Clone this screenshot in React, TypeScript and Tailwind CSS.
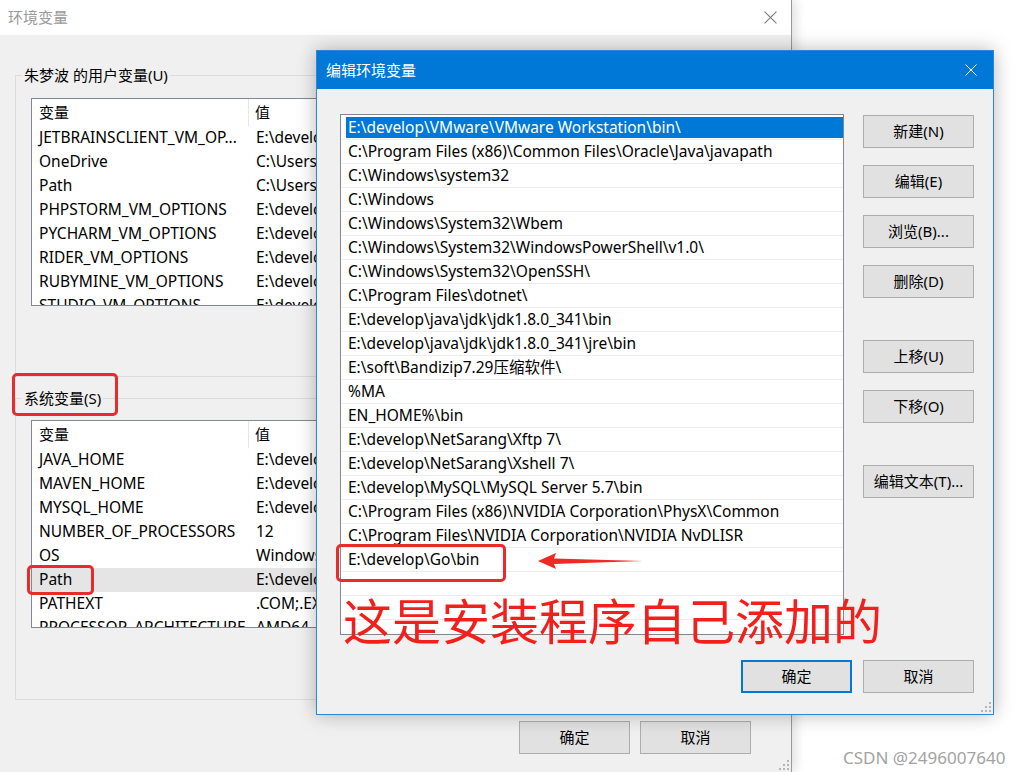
import React from 'react';

const userVars: [string, string][] = [
  ['JETBRAINSCLIENT_VM_OP...', 'E:\\develop\\JetBrains\\vmoptions'],
  ['OneDrive', 'C:\\Users\\OneDrive'],
  ['Path', 'C:\\Users\\AppData\\Local'],
  ['PHPSTORM_VM_OPTIONS', 'E:\\develop\\JetBrains\\vmoptions'],
  ['PYCHARM_VM_OPTIONS', 'E:\\develop\\JetBrains\\vmoptions'],
  ['RIDER_VM_OPTIONS', 'E:\\develop\\JetBrains\\vmoptions'],
  ['RUBYMINE_VM_OPTIONS', 'E:\\develop\\JetBrains\\vmoptions'],
  ['STUDIO_VM_OPTIONS', 'E:\\develop\\JetBrains\\vmoptions'],
];

const sysVars: [string, string][] = [
  ['JAVA_HOME', 'E:\\develop\\java\\jdk'],
  ['MAVEN_HOME', 'E:\\develop\\maven'],
  ['MYSQL_HOME', 'E:\\develop\\MySQL'],
  ['NUMBER_OF_PROCESSORS', '12'],
  ['OS', 'Windows_NT'],
  ['Path', 'E:\\develop\\VMware'],
  ['PATHEXT', '.COM;.EXE;.BAT;.CMD'],
  ['PROCESSOR_ARCHITECTURE', 'AMD64'],
];

const paths = [
  'E:\\develop\\VMware\\VMware Workstation\\bin\\',
  'C:\\Program Files (x86)\\Common Files\\Oracle\\Java\\javapath',
  'C:\\Windows\\system32',
  'C:\\Windows',
  'C:\\Windows\\System32\\Wbem',
  'C:\\Windows\\System32\\WindowsPowerShell\\v1.0\\',
  'C:\\Windows\\System32\\OpenSSH\\',
  'C:\\Program Files\\dotnet\\',
  'E:\\develop\\java\\jdk\\jdk1.8.0_341\\bin',
  'E:\\develop\\java\\jdk\\jdk1.8.0_341\\jre\\bin',
  'E:\\soft\\Bandizip7.29压缩软件\\',
  '%MA',
  'EN_HOME%\\bin',
  'E:\\develop\\NetSarang\\Xftp 7\\',
  'E:\\develop\\NetSarang\\Xshell 7\\',
  'E:\\develop\\MySQL\\MySQL Server 5.7\\bin',
  'C:\\Program Files (x86)\\NVIDIA Corporation\\PhysX\\Common',
  'C:\\Program Files\\NVIDIA Corporation\\NVIDIA NvDLISR',
  'E:\\develop\\Go\\bin',
  '',
  '',
  '',
];

const CloseIcon = ({ size, color }: { size: number; color: string }) => (
  <svg width={size} height={size} viewBox="0 0 12 12" fill="none" stroke={color} strokeWidth="1">
    <line x1="0.5" y1="0.5" x2="11.5" y2="11.5" />
    <line x1="11.5" y1="0.5" x2="0.5" y2="11.5" />
  </svg>
);

const Grip = () => (
  <svg width="10" height="10" viewBox="0 0 10 10" fill="#b4b4b4">
    <rect x="8" y="0" width="2" height="2" />
    <rect x="4" y="4" width="2" height="2" />
    <rect x="8" y="4" width="2" height="2" />
    <rect x="0" y="8" width="2" height="2" />
    <rect x="4" y="8" width="2" height="2" />
    <rect x="8" y="8" width="2" height="2" />
  </svg>
);

const Button = ({ children, primary }: { children: React.ReactNode; primary?: boolean }) => (
  <div
    className={`w-[111px] h-[33px] flex items-center justify-center bg-[#e1e1e1] text-[15px] text-black ${
      primary ? 'border-2 border-[#0078d7]' : 'border border-[#adadad]'
    }`}
  >
    {children}
  </div>
);

// the value column is clipped where the edit dialog covers it
const ListView = ({ rows, selected }: { rows: [string, string][]; selected?: string }) => (
  <div className="w-[730px] h-[208px] border border-[#828790] bg-white overflow-hidden text-[15.5px]">
    <div className="flex h-[27px] items-center text-[15px]">
      <div className="w-[217px] h-full pl-[7px] flex items-center border-r border-[#e5e5e5]">变量</div>
      <div className="pl-[6px]">值</div>
    </div>
    {rows.map(([name, value]) => (
      <div key={name} className={`flex h-[24px] items-center ${name === selected ? 'bg-[#e5e5e5]' : ''}`}>
        <div className="w-[218px] pl-[7px] whitespace-nowrap overflow-hidden">{name}</div>
        <div className="w-[66px] pl-[6px] whitespace-nowrap overflow-hidden">{value}</div>
      </div>
    ))}
  </div>
);

export default function App() {
  return (
    <div className="relative w-[1018px] h-[772px] bg-white overflow-hidden text-[15px] text-black font-['Noto_Sans','Noto_Sans_CJK_SC',sans-serif]">
      {/* Environment variables window */}
      <div className="absolute left-0 top-0 w-[792px] h-[772px] bg-[#f0f0f0] border-r border-[#9a9a9a] shadow-[4px_0_10px_rgba(0,0,0,0.12)] flex flex-col">
        <div className="h-[35px] bg-white flex items-center justify-between pl-[8px] pr-[14px] shrink-0">
          <span className="text-[#9a9a9a]">环境变量</span>
          <CloseIcon size={13} color="#7a7a7a" />
        </div>

        <div className="pl-[15px] pr-[15px] pt-[30px] flex flex-col">
          <fieldset className="h-[312px] border border-[#dcdcdc]">
            <legend className="ml-[6px] px-[2px] h-[20px] leading-[20px]">朱梦波 的用户变量(U)</legend>
            <div className="mt-[13px] pl-[15px]">
              <ListView rows={userVars} />
            </div>
          </fieldset>

          <fieldset className="h-[312px] mt-[11px] border border-[#dcdcdc]">
            <legend className="ml-[6px] px-[2px] h-[20px] leading-[20px]">系统变量(S)</legend>
            <div className="mt-[12px] pl-[15px]">
              <ListView rows={sysVars} selected="Path" />
            </div>
          </fieldset>
        </div>

        <div className="flex justify-end gap-[10px] pr-[40px] mt-[21px]">
          <Button>确定</Button>
          <Button>取消</Button>
        </div>
        <div className="mt-auto self-end pr-[2px] pb-[2px]">
          <Grip />
        </div>
      </div>

      {/* Edit environment variable dialog */}
      <div className="absolute left-[316px] top-[50px] w-[678px] h-[665px] bg-[#f0f0f0] border border-[#2b87d3] shadow-[0_0_18px_rgba(0,0,0,0.28)] flex flex-col">
        <div className="h-[38px] bg-[#0078d7] flex items-center justify-between pl-[9px] pr-[16px] shrink-0">
          <span className="text-white">编辑环境变量</span>
          <CloseIcon size={12} color="#ffffff" />
        </div>

        <div className="flex pl-[23px] pt-[25px]">
          <div className="w-[504px] h-[521px] border border-[#828790] bg-white overflow-hidden pt-[1px] pl-[1px] text-[15.5px]">
            {paths.map((p, i) =>
              i === 0 ? (
                <div key={i} className="h-[24px] border-b border-[#f0f0f0] pl-[4px] pt-[1px] pb-[1px]">
                  <div className="h-full bg-[#0078d7] text-white pl-[2px] flex items-center whitespace-nowrap">{p}</div>
                </div>
              ) : (
                <div key={i} className="h-[24px] border-b border-[#ececec] pl-[6px] flex items-center whitespace-nowrap">
                  {p}
                </div>
              )
            )}
          </div>

          <div className="ml-[19px] pt-[1px] flex flex-col">
            <div className="flex flex-col gap-[17px]">
              <Button>新建(N)</Button>
              <Button>编辑(E)</Button>
              <Button>浏览(B)...</Button>
              <Button>删除(D)</Button>
            </div>
            <div className="flex flex-col gap-[17px] mt-[42px]">
              <Button>上移(U)</Button>
              <Button>下移(O)</Button>
            </div>
            <div className="mt-[42px]">
              <Button>编辑文本(T)...</Button>
            </div>
          </div>
        </div>

        <div className="flex justify-end gap-[11px] pr-[19px] mt-[25px]">
          <Button primary>确定</Button>
          <Button>取消</Button>
        </div>
        <div className="mt-auto self-end pr-[2px] pb-[2px]">
          <Grip />
        </div>
      </div>

      {/* Red annotations */}
      <div className="absolute left-[12px] top-[373px] w-[106px] h-[43px] border-[3px] border-[#e82c2c] rounded-[5px]" />
      <div className="absolute left-[27px] top-[565px] w-[67px] h-[30px] border-[3px] border-[#e82c2c] rounded-[5px]" />
      <div className="absolute left-[336px] top-[544px] w-[170px] h-[38px] border-[3px] border-[#e82c2c] rounded-[5px]" />
      <svg className="absolute left-[535px] top-[550px]" width="110" height="22" viewBox="0 0 110 22">
        <polygon points="3,11 21,3 19,8.5 108,11 19,14 21,19" fill="#ee2a24" />
      </svg>
      <div className="absolute left-[343px] top-[591px] text-[49px] leading-[56px] text-[#f2201c] whitespace-nowrap font-['Noto_Sans_CJK_SC',sans-serif]">
        这是安装程序自己添加的
      </div>

      {/* Watermark */}
      <div className="absolute left-[843px] top-[745px] text-[17px] text-[#a3a3a3] whitespace-nowrap">CSDN @2496007640</div>
    </div>
  );
}
